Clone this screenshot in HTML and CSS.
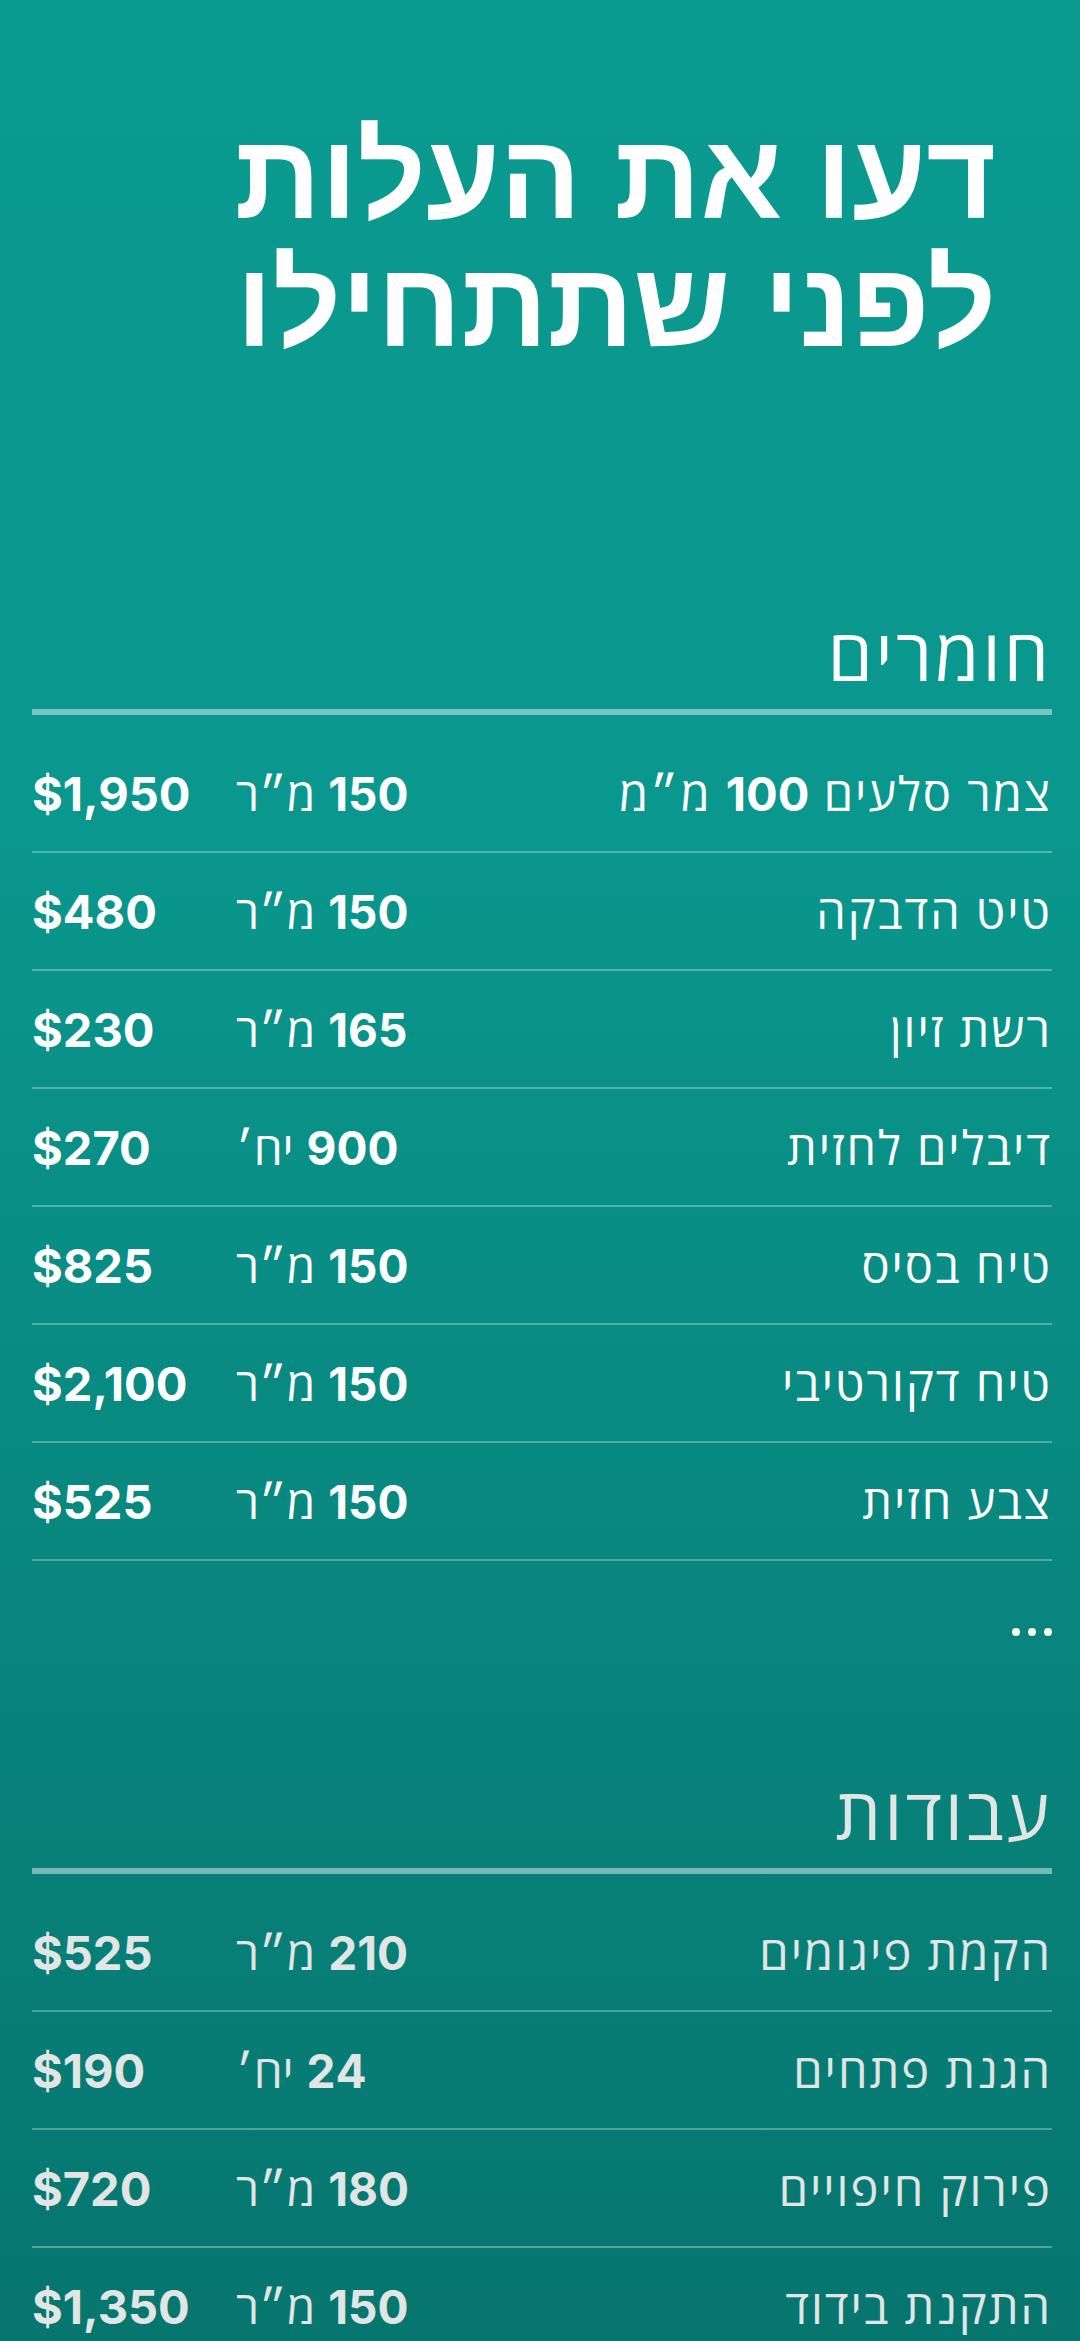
FILE: index.html
```html
<!DOCTYPE html>
<html lang="he" dir="rtl">
<head>
    <meta charset="UTF-8">
    <meta name="viewport" content="width=device-width, initial-scale=1.0">
    <title>דעו את העלות</title>
    <link rel="stylesheet" href="styles.css">
</head>
<body>
    <main class="page">
        <h1 class="title">דעו את העלות<br>לפני שתתחילו</h1>

        <section class="group">
            <h2 class="group-title">חומרים</h2>
            <ul class="cost-list">
                <li class="cost-row">
                    <span class="item">צמר סלעים <b>100</b> מ״מ</span>
                    <span class="qty"><b>150</b> מ״ר</span>
                    <span class="price">$1,950</span>
                </li>
                <li class="cost-row">
                    <span class="item">טיט הדבקה</span>
                    <span class="qty"><b>150</b> מ״ר</span>
                    <span class="price">$480</span>
                </li>
                <li class="cost-row">
                    <span class="item">רשת זיון</span>
                    <span class="qty"><b>165</b> מ״ר</span>
                    <span class="price">$230</span>
                </li>
                <li class="cost-row">
                    <span class="item">דיבלים לחזית</span>
                    <span class="qty"><b>900</b> יח׳</span>
                    <span class="price">$270</span>
                </li>
                <li class="cost-row">
                    <span class="item">טיח בסיס</span>
                    <span class="qty"><b>150</b> מ״ר</span>
                    <span class="price">$825</span>
                </li>
                <li class="cost-row">
                    <span class="item">טיח דקורטיבי</span>
                    <span class="qty"><b>150</b> מ״ר</span>
                    <span class="price">$2,100</span>
                </li>
                <li class="cost-row">
                    <span class="item">צבע חזית</span>
                    <span class="qty"><b>150</b> מ״ר</span>
                    <span class="price">$525</span>
                </li>
            </ul>
            <div class="more"><span></span><span></span><span></span></div>
        </section>

        <section class="group group-work">
            <h2 class="group-title">עבודות</h2>
            <ul class="cost-list">
                <li class="cost-row">
                    <span class="item">הקמת פיגומים</span>
                    <span class="qty"><b>210</b> מ״ר</span>
                    <span class="price">$525</span>
                </li>
                <li class="cost-row">
                    <span class="item">הגנת פתחים</span>
                    <span class="qty"><b>24</b> יח׳</span>
                    <span class="price">$190</span>
                </li>
                <li class="cost-row">
                    <span class="item">פירוק חיפויים</span>
                    <span class="qty"><b>180</b> מ״ר</span>
                    <span class="price">$720</span>
                </li>
                <li class="cost-row">
                    <span class="item">התקנת בידוד</span>
                    <span class="qty"><b>150</b> מ״ר</span>
                    <span class="price">$1,350</span>
                </li>
            </ul>
        </section>
    </main>
</body>
</html>
```

FILE: styles.css
```css
html {
    background: #06756e;
}

body {
    margin: 0;
    min-height: 100vh;
    font-family: Inter, "Open Sans", "Liberation Sans", sans-serif;
    color: #fff;
    background: linear-gradient(180deg, #0b9a90 0%, #0a978d 35%, #06756e 100%);
}

.page {
    padding: 112px 28px 0 32px;
}

.title {
    margin: 0 56px 0 0;
    font-family: "Liberation Sans", sans-serif;
    font-size: 120px;
    font-weight: 700;
    line-height: 128px;
    letter-spacing: 0;
}

.group {
    margin-top: 245px;
}

.group-title {
    margin: 0;
    padding-bottom: 16px;
    font-family: "Open Sans", "Liberation Sans", sans-serif;
    font-size: 72px;
    font-weight: 400;
    line-height: 80px;
    letter-spacing: 3px;
    border-bottom: 6px solid rgba(255, 255, 255, 0.45);
}

.cost-list {
    list-style: none;
    margin: 0;
    padding: 20px 0 0;
}

.cost-row {
    display: grid;
    grid-template-columns: 1fr 200px 204px;
    align-items: center;
    height: 116px;
    border-bottom: 2px solid rgba(255, 255, 255, 0.3);
}

.item {
    font-family: "Open Sans", "Liberation Sans", sans-serif;
    font-size: 47px;
    letter-spacing: 2px;
}

.item b {
    font-family: Inter, sans-serif;
    font-weight: 700;
    letter-spacing: 0;
}

.qty {
    text-align: left;
    font-size: 46px;
}

.qty b {
    font-weight: 700;
}

.price {
    direction: ltr;
    text-align: left;
    font-size: 47px;
    font-weight: 700;
}

.more {
    display: flex;
    gap: 8px;
    margin-top: 67px;
}

.more span {
    width: 8px;
    height: 8px;
    border-radius: 50%;
    background: #fff;
}

.group-work {
    margin-top: 136px;
    color: #e1e5e3;
}
```
